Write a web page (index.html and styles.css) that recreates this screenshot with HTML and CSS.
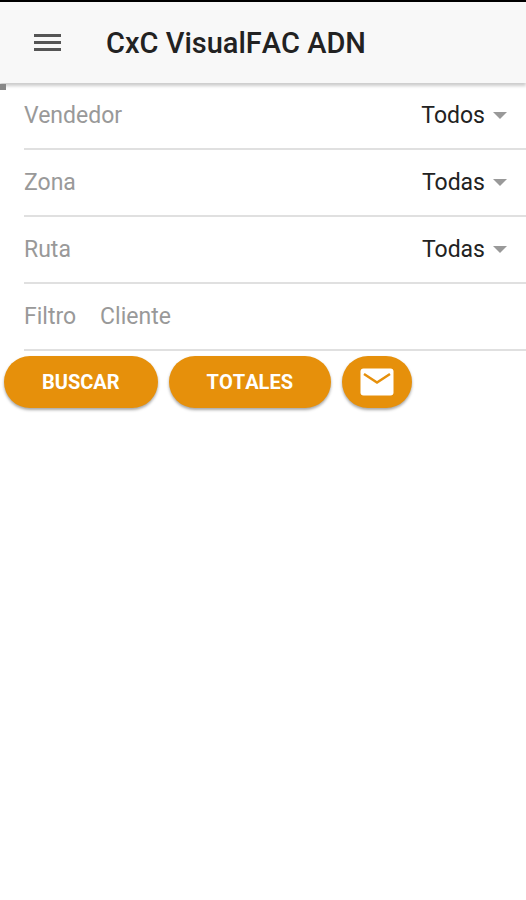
FILE: index.html
```html
<!DOCTYPE html>
<html lang="es">
<head>
<meta charset="utf-8">
<meta name="viewport" content="width=device-width, initial-scale=1">
<title>CxC VisualFAC ADN</title>
<link rel="stylesheet" href="styles.css">
</head>
<body>
<header class="toolbar">
  <button class="menu" type="button" aria-label="Menú">
    <svg width="28" height="20" viewBox="0 0 28 20" aria-hidden="true"><path d="M1 1h27v3H1zM1 8h27v3H1zM1 15h27v3H1z"/></svg>
  </button>
  <h1 class="title">CxC VisualFAC ADN</h1>
  <div class="progress"></div>
</header>
<main>
  <form>
    <div class="fields">
      <div class="row">
        <label for="vendedor">Vendedor</label>
        <select id="vendedor"><option>Todos</option></select>
        <svg class="arrow" width="14" height="7" viewBox="0 0 14 7" aria-hidden="true"><path d="M0 0h14L7 7z"/></svg>
      </div>
      <div class="row">
        <label for="zona">Zona</label>
        <select id="zona"><option>Todas</option></select>
        <svg class="arrow" width="14" height="7" viewBox="0 0 14 7" aria-hidden="true"><path d="M0 0h14L7 7z"/></svg>
      </div>
      <div class="row">
        <label for="ruta">Ruta</label>
        <select id="ruta"><option>Todas</option></select>
        <svg class="arrow" width="14" height="7" viewBox="0 0 14 7" aria-hidden="true"><path d="M0 0h14L7 7z"/></svg>
      </div>
      <div class="row">
        <label for="filtro">Filtro</label>
        <input id="filtro" type="text" placeholder="Cliente">
      </div>
    </div>
    <div class="actions">
      <button class="button" type="button">BUSCAR</button>
      <button class="button" type="button">TOTALES</button>
      <button class="button button-icon" type="button" aria-label="Enviar correo">
        <svg width="34" height="28" viewBox="0 0 34 28" aria-hidden="true"><rect x=".5" y=".5" width="33" height="27" rx="3" fill="#fff"/><path d="M4 6l13 8.500L30 6" fill="none" stroke="#e6900b" stroke-width="2.500"/></svg>
      </button>
    </div>
  </form>
</main>
</body>
</html>
```
FILE: styles.css
```css
* {
  box-sizing: border-box;
}

body {
  margin: 0;
  background: #fff;
  color: #222;
  font-family: Roboto, sans-serif;
  font-size: 23px;
}

button,
input,
select {
  margin: 0;
  padding: 0;
  border: 0;
  background: none;
  color: inherit;
  font: inherit;
}

.toolbar {
  position: relative;
  display: flex;
  align-items: center;
  gap: 45px;
  height: 83px;
  padding-left: 33px;
  border-top: 2px solid #000;
  background: #f8f8f8;
  box-shadow: 0 3px 3px rgba(0, 0, 0, 0.2);
}

.menu {
  display: flex;
}

.menu svg {
  fill: #555;
}

.title {
  margin: 0;
  font-size: 29px;
  font-weight: 500;
  line-height: 32px;
  font-kerning: none;
}

.progress {
  position: absolute;
  left: 0;
  top: 82px;
  width: 6px;
  height: 6px;
  background: #888;
}

.fields {
  padding-left: 24px;
}

.row {
  display: flex;
  align-items: center;
  height: 67px;
  padding-right: 19px;
  border-bottom: 2px solid #e0e0e0;
}

.row label {
  color: #999;
}

.row select {
  flex: 1;
  appearance: none;
  text-align: right;
  text-align-last: right;
}

.row input {
  flex: 1;
  min-width: 0;
  margin-left: 24px;
}

.row input::placeholder {
  color: #999;
}

.arrow {
  margin-left: 8px;
  fill: #999;
}

.actions {
  display: flex;
  gap: 11px;
  padding: 5px 4px;
}

.button {
  display: flex;
  align-items: center;
  justify-content: center;
  height: 52px;
  padding: 0 38px;
  border-radius: 26px;
  background: #e6900b;
  box-shadow: 0 2px 3px rgba(0, 0, 0, 0.35);
  color: #fff;
  font-size: 20px;
  font-weight: 700;
  font-kerning: none;
}

.button-icon {
  padding: 0 18px;
}
```
